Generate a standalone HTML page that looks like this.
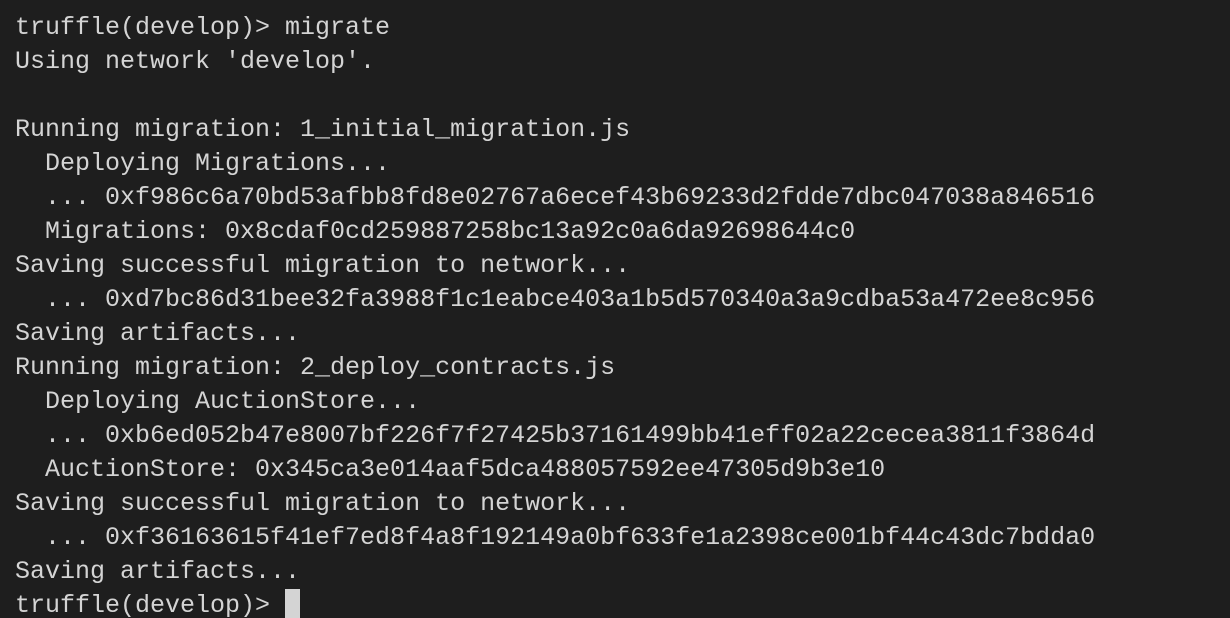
<!DOCTYPE html>
<html><head><style>
html,body{margin:0;padding:0;background:#1e1e1e;width:1230px;height:618px;overflow:hidden}
pre{margin:0;padding:11px 0 0 15px;font-family:"Liberation Mono",monospace;font-size:25px;line-height:34px;color:#d4d4d4;white-space:pre}
.c{display:inline-block;width:15px;height:29px;background:#d4d4d4;vertical-align:-6px}
</style></head><body><pre>truffle(develop)&gt; migrate
Using network 'develop'.

Running migration: 1_initial_migration.js
  Deploying Migrations...
  ... 0xf986c6a70bd53afbb8fd8e02767a6ecef43b69233d2fdde7dbc047038a846516
  Migrations: 0x8cdaf0cd259887258bc13a92c0a6da92698644c0
Saving successful migration to network...
  ... 0xd7bc86d31bee32fa3988f1c1eabce403a1b5d570340a3a9cdba53a472ee8c956
Saving artifacts...
Running migration: 2_deploy_contracts.js
  Deploying AuctionStore...
  ... 0xb6ed052b47e8007bf226f7f27425b37161499bb41eff02a22cecea3811f3864d
  AuctionStore: 0x345ca3e014aaf5dca488057592ee47305d9b3e10
Saving successful migration to network...
  ... 0xf36163615f41ef7ed8f4a8f192149a0bf633fe1a2398ce001bf44c43dc7bdda0
Saving artifacts...
truffle(develop)&gt; <span class="c"></span></pre></body></html>
